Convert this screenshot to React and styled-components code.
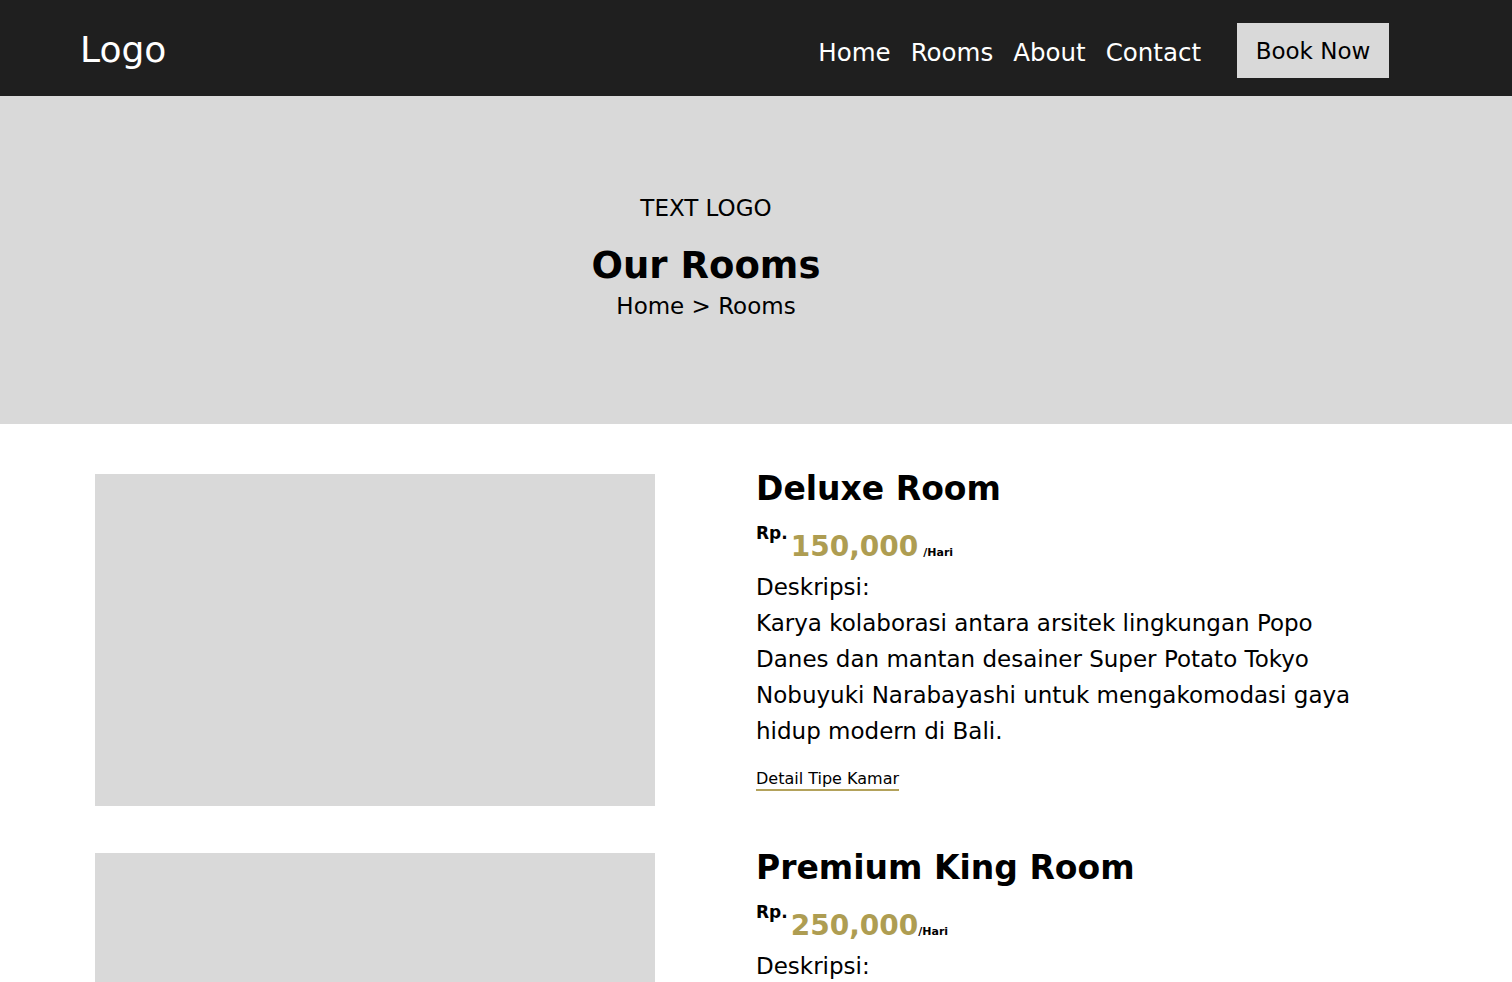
import React from 'react'
import styled, { createGlobalStyle } from 'styled-components'

const GlobalStyle = createGlobalStyle`
  body {
    margin: 0;
    font-family: "DejaVu Sans", "Noto Sans", sans-serif;
    background: #ffffff;
    color: #000;
  }
`

const Navbar = styled.nav`
  height: 96px;
  background: #1f1f1f;
  display: flex;
  align-items: center;
  justify-content: space-between;
  padding: 4px 123px 0 80px;
  box-sizing: border-box;
`

const Logo = styled.div`
  color: #fff;
  font-size: 36px;
  line-height: 1;
  margin-top: 0;
`

const NavRight = styled.div`
  display: flex;
  align-items: center;
`

const NavLinks = styled.ul`
  display: flex;
  gap: 20px;
  list-style: none;
  margin: 4px 36px 0 0;
  padding: 0;
  li a {
    color: #fff;
    font-size: 24.5px;
    text-decoration: none;
  }
`

const BookButton = styled.button`
  background: #d9d9d9;
  border: none;
  width: 152px;
  height: 55px;
  padding: 0;
  font-family: "DejaVu Sans", sans-serif;
  font-size: 23px;
  color: #000;
  margin-top: 1px;
`

const Hero = styled.header`
  height: 328px;
  background: #d9d9d9;
  display: flex;
  flex-direction: column;
  align-items: center;
  justify-content: center;
  padding-right: 100px;
  padding-bottom: 7px;
  box-sizing: border-box;
`

const HeroTag = styled.p`
  margin: 0;
  font-size: 23px;
  line-height: 30px;
`

const HeroTitle = styled.h1`
  margin: 21px 0 0;
  font-size: 37px;
  line-height: 44px;
  font-weight: 700;
`

const Crumbs = styled.p`
  margin: 3px 0 0;
  font-size: 23px;
  line-height: 30px;
`

const RoomList = styled.main`
  padding: 50px 0 0 95px;
  display: flex;
  flex-direction: column;
  gap: 47px;
`

const RoomRow = styled.section`
  display: flex;
  gap: 101px;
  align-items: flex-start;
`

const RoomImage = styled.div`
  width: 560px;
  height: 332px;
  background: #d9d9d9;
  flex-shrink: 0;
`

const RoomInfo = styled.div`
  width: 625px;
`

const RoomTitle = styled.h2`
  margin: 0;
  font-size: 33px;
  line-height: 30px;
  font-weight: 700;
`

const Price = styled.div`
  margin-top: 25px;
  line-height: 36px;
  font-weight: 700;
  white-space: nowrap;
`

const Currency = styled.span`
  font-size: 17px;
  line-height: 0;
  vertical-align: 17px;
  margin-right: 3px;
`

const Amount = styled.span`
  font-size: 28px;
  color: #ae9d52;
`

const PerDay = styled.span`
  font-size: 11px;
  line-height: 0;
  margin-left: ${p => p.$gap}px;
`

const Desc = styled.div`
  font-size: 23px;
  line-height: 36px;
  p {
    margin: 0;
  }
`

const DetailLink = styled.a`
  display: inline-block;
  margin-top: 20px;
  font-size: 16px;
  line-height: 20px;
  color: #000;
  text-decoration: none;
  border-bottom: 2px solid #b3a25b;
`

const rooms = [
  { name: 'Deluxe Room', price: '150,000', gap: 5 },
  { name: 'Premium King Room', price: '250,000', gap: 0 },
]

export default function App() {
  return (
    <>
      <GlobalStyle />
      <Navbar>
        <Logo>Logo</Logo>
        <NavRight>
          <NavLinks>
            <li><a href="#">Home</a></li>
            <li><a href="#">Rooms</a></li>
            <li><a href="#">About</a></li>
            <li><a href="#">Contact</a></li>
          </NavLinks>
          <BookButton>Book Now</BookButton>
        </NavRight>
      </Navbar>

      <Hero>
        <HeroTag>TEXT LOGO</HeroTag>
        <HeroTitle>Our Rooms</HeroTitle>
        <Crumbs>Home &gt; Rooms</Crumbs>
      </Hero>

      <RoomList>
        {rooms.map(room => (
          <RoomRow key={room.name}>
            <RoomImage />
            <RoomInfo>
              <RoomTitle>{room.name}</RoomTitle>
              <Price>
                <Currency>Rp.</Currency>
                <Amount>{room.price}</Amount>
                <PerDay $gap={room.gap}>/Hari</PerDay>
              </Price>
              <Desc>
                <p>Deskripsi:</p>
                <p>
                  Karya kolaborasi antara arsitek lingkungan Popo Danes dan mantan desainer Super Potato Tokyo Nobuyuki Narabayashi untuk mengakomodasi gaya hidup modern di Bali.
                </p>
              </Desc>
              <DetailLink href="#">Detail Tipe Kamar</DetailLink>
            </RoomInfo>
          </RoomRow>
        ))}
      </RoomList>
    </>
  )
}
